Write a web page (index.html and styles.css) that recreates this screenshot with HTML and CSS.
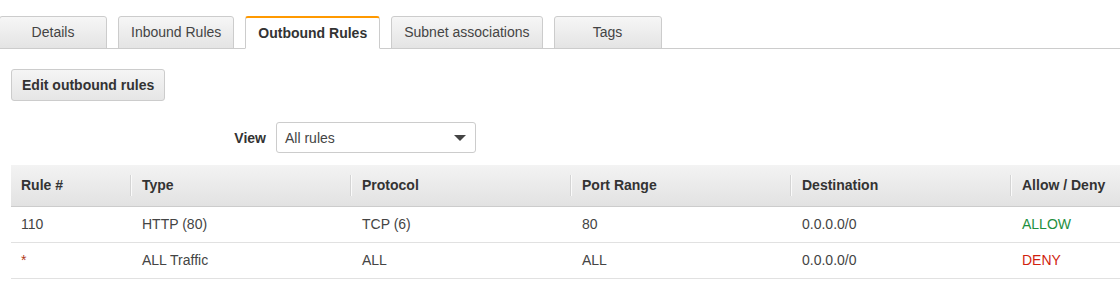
FILE: index.html
```html
<!DOCTYPE html>
<html lang="en">
<head>
  <meta charset="UTF-8">
  <meta name="viewport" content="width=device-width, initial-scale=1.0">
  <title>Network ACL - Outbound Rules</title>
  <link rel="stylesheet" href="styles.css">
</head>
<body>
  <ul class="tabs">
    <li class="tab">Details</li>
    <li class="tab">Inbound Rules</li>
    <li class="tab active">Outbound Rules</li>
    <li class="tab">Subnet associations</li>
    <li class="tab">Tags</li>
  </ul>

  <section class="panel">
    <button class="btn">Edit outbound rules</button>

    <div class="filter">
      <label class="filter-label" for="view">View</label>
      <div class="select" id="view">
        <span>All rules</span>
        <i class="caret"></i>
      </div>
    </div>

    <table class="rules">
      <thead>
        <tr>
          <th class="col-num">Rule #</th>
          <th><span class="sep"></span>Type</th>
          <th><span class="sep"></span>Protocol</th>
          <th><span class="sep"></span>Port Range</th>
          <th><span class="sep"></span>Destination</th>
          <th><span class="sep"></span>Allow / Deny</th>
        </tr>
      </thead>
      <tbody>
        <tr>
          <td>110</td>
          <td>HTTP (80)</td>
          <td>TCP (6)</td>
          <td>80</td>
          <td>0.0.0.0/0</td>
          <td class="allow">ALLOW</td>
        </tr>
        <tr>
          <td class="star">*</td>
          <td>ALL Traffic</td>
          <td>ALL</td>
          <td>ALL</td>
          <td>0.0.0.0/0</td>
          <td class="deny">DENY</td>
        </tr>
      </tbody>
    </table>
  </section>
</body>
</html>
```

FILE: styles.css
```css
* {
  padding: 0;
  margin: 0;
  box-sizing: border-box;
}
body {
  font-family: "Liberation Sans", Arial, sans-serif;
  font-size: 14px;
  color: #444;
  background-color: #fff;
  overflow: hidden;
}
.tabs {
  list-style: none;
  display: flex;
  gap: 11px;
  padding-top: 16px;
  margin-left: -1px;
  border-bottom: 1px solid #ccc;
}
.tab {
  min-width: 108px;
  height: 33px;
  margin-bottom: -1px;
  padding: 0 12px;
  line-height: 31px;
  text-align: center;
  color: #444;
  border: 1px solid #ccc;
  border-radius: 3px 3px 0 0;
  background: linear-gradient(#f6f6f6, #e4e4e4);
}
.tab.active {
  font-weight: bold;
  color: #333;
  background: #fff;
  border-top: 2px solid #f90;
  border-bottom-color: #fff;
  line-height: 30px;
}
.panel {
  padding: 20px 0 0 11px;
}
.btn {
  display: block;
  height: 32px;
  padding: 0 10px;
  font-family: inherit;
  font-size: 14px;
  font-weight: bold;
  color: #333;
  border: 1px solid #ccc;
  border-radius: 3px;
  background: linear-gradient(#f5f5f5, #e6e6e6);
}
.filter {
  display: flex;
  align-items: center;
  gap: 10px;
  margin-top: 21px;
}
.filter-label {
  width: 255px;
  text-align: right;
  font-weight: bold;
  color: #333;
}
.select {
  display: flex;
  align-items: center;
  justify-content: space-between;
  width: 200px;
  height: 31px;
  padding: 0 8px;
  color: #444;
  border: 1px solid #ccc;
  border-radius: 3px;
  background: #fff;
}
.caret {
  width: 0;
  height: 0;
  margin-right: 1px;
  border-left: 6px solid transparent;
  border-right: 6px solid transparent;
  border-top: 6px solid #444;
}
.rules {
  margin-top: 12px;
  border-collapse: collapse;
  table-layout: fixed;
  width: 1219px;
}
.rules th {
  position: relative;
  width: 220px;
  height: 41px;
  padding: 0 12px;
  text-align: left;
  font-weight: bold;
  color: #333;
  border-bottom: 1px solid #ccc;
  background: linear-gradient(#f3f3f3, #e2e2e2);
}
.rules th.col-num {
  width: 119px;
  padding-left: 10px;
}
.sep {
  position: absolute;
  left: 0;
  top: 10px;
  bottom: 10px;
  width: 2px;
  border-left: 1px solid #d4d4d4;
  background: #fafafa;
}
.rules td {
  height: 36px;
  padding: 0 12px;
  border-bottom: 1px solid #e1e1e1;
}
.rules td:first-child {
  padding-left: 10px;
}
.rules .star {
  color: #b03a1a;
}
.rules .allow {
  color: #1d8f3e;
}
.rules .deny {
  color: #d11f0f;
}
```
